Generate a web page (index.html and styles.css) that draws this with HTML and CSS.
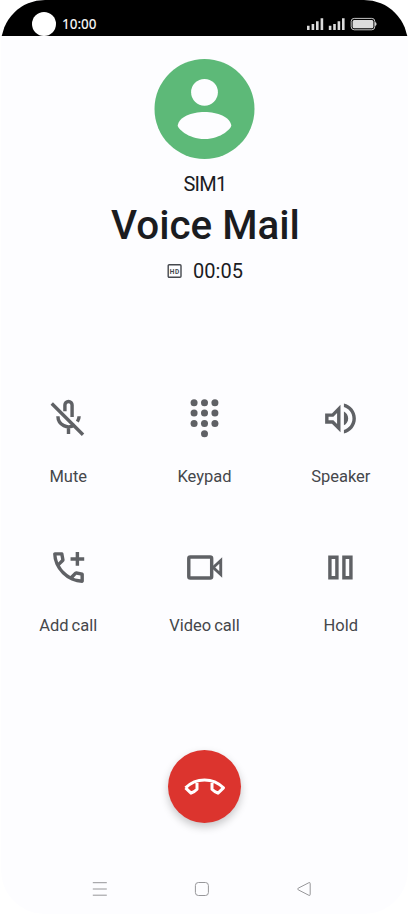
FILE: index.html
```html
<!DOCTYPE html>
<html lang="en">

<head>
    <meta charset="UTF-8">
    <meta name="viewport" content="width=device-width, initial-scale=1">
    <title>Voice Mail</title>
    <link rel="stylesheet" href="styles.css">
</head>

<body>
    <div class="phone">
        <header class="status_bar">
            <span class="camera"></span>
            <span class="time">10:00</span>
            <svg class="status_icons" width="72" height="14" viewBox="0 0 72 14">
                <g fill="#dcdcdc">
                    <path d="M1 8.7h2.6V13H1zM5.6 7h2.6v6H5.6zM10 4.3h2.6V13H10zM14.6 1.2h2.6V13h-2.6z" />
                    <path d="M22.8 8.7h2.6V13h-2.6zM27.2 7h2.6v6h-2.6zM31.6 4.3h2.6V13h-2.6zM36 1.2h2.6V13H36z" />
                    <rect x="46.6" y="2.9" width="20.8" height="8.4" rx="1.5" />
                    <path d="M69 5q1.6.4 1.6 2t-1.6 2z" />
                </g>
                <rect x="45.2" y="1.4" width="23.6" height="11.4" rx="3" fill="none" stroke="#c4c4c4" />
            </svg>
        </header>

        <main>
            <svg class="avatar" width="101" height="100" viewBox="0 0 101 100">
                <circle cx="50.5" cy="50" r="50" fill="#5db978" />
                <circle cx="50.5" cy="33.3" r="13.4" fill="#fdfdff" />
                <path d="M23.7 66.5C25 58 37.5 53 50.5 53s25.5 5 26.8 13.5C77.500 69 67.5 80 50.5 80S23.500 69 23.700 66.500z" fill="#fdfdff" />
            </svg>
            <p class="sim">SIM1</p>
            <h1>Voice Mail</h1>
            <div class="duration">
                <svg width="15" height="15" viewBox="0 0 15 15">
                    <rect x="1.2" y=".8" width="12.8" height="12.4" rx="1" fill="none" stroke="#45484e" stroke-width="1.4" />
                    <text class="hd" x="7.6" y="9.5" text-anchor="middle" textLength="9.5">HD</text>
                </svg>
                <span>00:05</span>
            </div>

            <div class="actions">
                <div class="action">
                    <svg viewBox="0 0 24 24">
                        <g fill="none" stroke="currentColor" stroke-width="2">
                            <path d="M9.900 7.800V4.100a2.100 2.100 0 0 1 4.200 0v7" />
                            <path d="M5.800 10.700a6.200 6.200 0 0 0 9.900 4.900M12 16.700v4.300M18.200 10.700q0 1.600-1 3.100" />
                            <path d="M2.200 3.200l18.300 18.300" />
                        </g>
                    </svg>
                    <span>Mute</span>
                </div>
                <div class="action">
                    <svg viewBox="0 0 24 24" fill="currentColor">
                        <circle cx="5.9" cy="2.8" r="2.05" /><circle cx="12" cy="2.8" r="2.05" /><circle cx="18.1" cy="2.8" r="2.05" />
                        <circle cx="5.9" cy="8.85" r="2.05" /><circle cx="12" cy="8.85" r="2.05" /><circle cx="18.1" cy="8.85" r="2.05" />
                        <circle cx="5.9" cy="14.9" r="2.05" /><circle cx="12" cy="14.9" r="2.05" /><circle cx="18.1" cy="14.9" r="2.05" />
                        <circle cx="12" cy="20.9" r="2.05" />
                    </svg>
                    <span>Keypad</span>
                </div>
                <div class="action">
                    <svg viewBox="0 0 24 24" fill="currentColor">
                        <path d="M3 9v6h4l5 5V4L7 9H3zm7-.17v6.34L7.83 13H5v-2h2.83L10 8.83zM16.5 12c0-1.77-1.02-3.29-2.5-4.03v8.05c1.48-.73 2.5-2.25 2.5-4.02zM14 3.23v2.06c2.89.86 5 3.54 5 6.71s-2.11 5.85-5 6.71v2.06c4.01-.91 7-4.49 7-8.77s-2.99-7.86-7-8.77z" />
                    </svg>
                    <span>Speaker</span>
                </div>
                <div class="action">
                    <svg viewBox="0 0 24 24" fill="currentColor">
                        <path d="M19.95 21q-3.125 0-6.175-1.362t-5.55-3.863t-3.862-5.55T3 4.05q0-.45.3-.75t.75-.3H8.1q.35 0 .625.238t.325.562l.65 3.5q.05.4-.025.675T9.4 8.45L6.975 10.9q.5.925 1.187 1.787t1.513 1.663q.775.775 1.625 1.438T13.1 17l2.35-2.35q.225-.225.588-.337t.712-.063l3.45.7q.35.1.575.363T21 15.9v4.05q0 .45-.3.75t-.75.3M6.025 9l1.65-1.65L7.25 5H5.025q.125 1.025.35 2.025T6.025 9m8.95 8.95q.975.425 1.988.675T19 18.95v-2.2l-2.35-.475z" />
                        <path d="M18.2 2.9V6h3v2h-3v3h-2V8h-3V6h3V2.9z" />
                    </svg>
                    <span>Add call</span>
                </div>
                <div class="action">
                    <svg viewBox="0 0 24 24" fill="none" stroke="currentColor" stroke-width="2">
                        <rect x="2.8" y="5.9" width="13.4" height="12.2" rx=".9" />
                        <path d="M17.1 12l4.400-4.100v8.200z" stroke-width="1.7" />
                    </svg>
                    <span>Video call</span>
                </div>
                <div class="action">
                    <svg viewBox="0 0 24 24" fill="none" stroke="currentColor" stroke-width="2">
                        <path d="M5.8 6h4.1v12H5.8zM14 6h4.1v12H14z" />
                    </svg>
                    <span>Hold</span>
                </div>
            </div>

            <button class="end_call" aria-label="End call">
                <svg width="43" height="20" viewBox="0 0 43 20" fill="none" stroke="#fff" stroke-width="3" stroke-linejoin="round">
                    <path d="M2.500 10.900Q10.500 3 21.500 3t19 7.900l-5.500 5.300q-3.500-1.400-6-4V4.500M14 4.500v7.700q-2.500 2.600-6 4l-5.500-5.300" />
                </svg>
            </button>
        </main>

        <nav>
            <svg viewBox="0 0 16 16"><path d="M.8 1.7h14M.8 8h14M.8 14.2h14" /></svg>
            <svg viewBox="0 0 16 16"><rect x="1.4" y="1.5" width="13" height="13" rx="3" /></svg>
            <svg viewBox="0 0 16 16"><path d="M2.2 7.2L12.9 1.7q1.3-.5 1.3.8v11q0 1.3-1.3.8L2.2 8.8q-1.2-.8 0-1.6z" /></svg>
        </nav>
    </div>
</body>

</html>
```
FILE: styles.css
```css
*{
    padding: 0px;
    margin: 0px;
    box-sizing: border-box;
}

body{
    background-color: white;
    font-family: Roboto, "Liberation Sans", sans-serif;
    color: #1b1c1f;
}

.phone{
    width: 407px;
    height: 914px;
    margin: 0px auto;
    background-color: #fdfdff;
    border-radius: 44px;
    overflow: hidden;
    display: flex;
    flex-direction: column;
}

.status_bar{
    height: 36px;
    padding: 11px 30px 0px 31px;
    background-color: black;
    display: flex;
    align-items: center;
}

.camera{
    width: 24px;
    height: 24px;
    border-radius: 50%;
    background-color: white;
}

.time{
    margin-left: 6px;
    font-family: "Noto Sans", sans-serif;
    font-size: 13.5px;
    font-weight: 500;
    line-height: 24px;
    color: #f2f2f2;
}

.status_icons{
    margin-left: auto;
}

main{
    display: flex;
    flex-direction: column;
    align-items: center;
}

.avatar{
    margin-top: 23px;
}

.sim{
    margin-top: 13px;
    padding-left: 1px;
    font-size: 20px;
    line-height: 24px;
    letter-spacing: -0.7px;
}

h1{
    margin-top: 6px;
    padding-left: 2px;
    font-size: 40.4px;
    font-weight: 500;
    line-height: 48px;
}

.duration{
    display: flex;
    align-items: center;
    gap: 11px;
    margin-top: 9px;
    padding-left: 1px;
    font-size: 20px;
    line-height: 24px;
}

.hd{
    font-size: 6.5px;
    font-weight: 700;
    fill: #45484e;
}

.actions{
    display: grid;
    grid-template-columns: repeat(3, 100px);
    gap: 60px 36.3px;
    margin-top: 115px;
}

.action{
    height: 89px;
    display: flex;
    flex-direction: column;
    align-items: center;
    justify-content: space-between;
    font-size: 16.5px;
    line-height: 20px;
    word-spacing: -1px;
    color: #45474b;
}

.action svg{
    width: 41px;
    height: 41px;
    color: #5f6165;
}

.end_call{
    width: 73px;
    height: 73px;
    margin-top: 114px;
    border: none;
    border-radius: 50%;
    background-color: #dc342e;
    box-shadow: 0px 4px 8px rgba(0, 0, 0, 0.22);
    display: flex;
    justify-content: center;
    align-items: center;
}

nav{
    display: flex;
    justify-content: space-between;
    margin-top: auto;
    padding: 0px 96px 17px 91px;
}

nav svg{
    width: 16px;
    height: 16px;
    fill: none;
    stroke: #969699;
}
```
